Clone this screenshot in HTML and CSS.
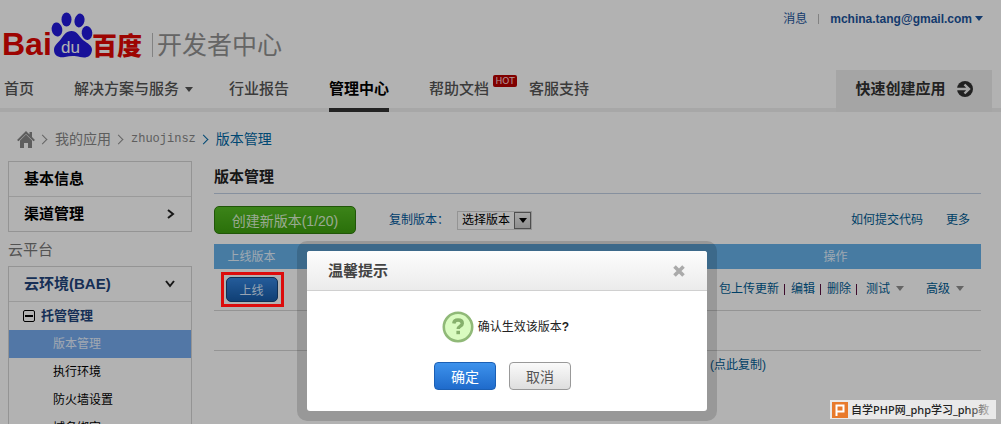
FILE: index.html
```
<!DOCTYPE html>
<html lang="zh-CN">
<head>
    <meta charset="UTF-8">
    <meta name="viewport" content="width=device-width, initial-scale=1.0">
    <title>版本管理</title>
    <link rel="stylesheet" href="styles.css">
</head>
<body>
    <header class="header">
        <div class="top">
            <div class="brand">
                <svg class="logo" width="140" height="50" viewBox="0 0 140 50" role="img" aria-label="Baidu 百度">
                    <g class="logo-red">
                        <text class="logo-bai" x="-2" y="46">Bai</text>
                        <text class="logo-cn" x="88" y="46">百度</text>
                    </g>
                    <g class="logo-blue">
                        <ellipse cx="53" cy="20.500" rx="5.300" ry="7" transform="rotate(-10 53 20.500)"/>
                        <ellipse cx="62.500" cy="10.500" rx="5" ry="7"/>
                        <ellipse cx="75.500" cy="11.500" rx="5" ry="7" transform="rotate(12 75.500 11.500)"/>
                        <ellipse cx="83" cy="24" rx="5.300" ry="7" transform="rotate(-6 83 24)"/>
                        <path d="M67.500 22C73 22 75 27 79 31C84 35 88 36 88 41C87 49 81 49 76 48C70 46.500 66 47 61 48C55 49 50 47 50 41C50 36 54 34 57 30C60 26 62 22 67.500 22Z"/>
                    </g>
                    <text class="logo-du" x="57" y="44">du</text>
                </svg>
                <span class="brand-name">开发者中心</span>
            </div>
            <div class="user">
                <a href="#">消息</a>
                <span class="user-sep"></span>
                <a href="#" class="user-mail">mchina.tang@gmail.com<i class="arrow arrow-blue"></i></a>
            </div>
        </div>
        <nav class="nav">
            <a href="#">首页</a>
            <a href="#">解决方案与服务<i class="arrow arrow-nav"></i></a>
            <a href="#">行业报告</a>
            <a href="#" class="active">管理中心</a>
            <a href="#" class="nav-doc">帮助文档<span class="hot">HOT</span></a>
            <a href="#">客服支持</a>
            <a href="#" class="quick">快速创建应用
                <svg width="16" height="16" viewBox="0 0 16 16">
                    <circle cx="8" cy="8" r="8" fill="#323232"/>
                    <path d="M0 8h11M7.500 3.500L12 8l-4.500 4.500" fill="none" stroke="#ededed" stroke-width="2.400"/>
                </svg>
            </a>
        </nav>
    </header>

    <nav class="crumbs">
        <a href="#" aria-label="home">
            <svg width="18" height="17" viewBox="0 0 18 17" fill="#878787">
                <path d="M9 0L0 9l1.500 1.200L9 3l7.500 7.200L18 9l-3-3V1h-2.500v2.500Z"/>
                <path d="M9 3.500L3 9.500V17h4v-5h4v5h4V9.500Z"/>
            </svg>
        </a>
        <i class="chev"></i>
        <a href="#">我的应用</a>
        <i class="chev"></i>
        <a href="#" class="app-name">zhuojinsz</a>
        <i class="chev chev-blue"></i>
        <a href="#" class="current">版本管理</a>
    </nav>

    <div class="layout">
        <aside class="sidebar">
            <div class="box">
                <a href="#" class="box-item">基本信息</a>
                <a href="#" class="box-item">渠道管理
                    <svg width="8" height="10" viewBox="0 0 8 10"><path d="M1 1l5 4-5 4" fill="none" stroke="#222" stroke-width="2"/></svg>
                </a>
            </div>
            <div class="side-title">云平台</div>
            <div class="box">
                <a href="#" class="box-item env"><span>云环境(BAE)</span>
                    <svg width="10" height="8" viewBox="0 0 10 8"><path d="M1 1l4 5 4-5" fill="none" stroke="#222" stroke-width="2"/></svg>
                </a>
                <a href="#" class="group"><i class="minus"></i>托管管理</a>
                <a href="#" class="sub selected">版本管理</a>
                <a href="#" class="sub">执行环境</a>
                <a href="#" class="sub">防火墙设置</a>
                <a href="#" class="sub">域名绑定</a>
            </div>
        </aside>

        <main class="content">
            <h1>版本管理</h1>
            <div class="toolbar">
                <button type="button" class="btn-green">创建新版本(1/20)</button>
                <label for="copy-version">复制版本：</label>
                <span class="select-box">
                    <select id="copy-version">
                        <option>选择版本</option>
                    </select>
                    <span class="select-arrow"><i class="arrow"></i></span>
                </span>
                <div class="links">
                    <a href="#">如何提交代码</a>
                    <a href="#">更多</a>
                </div>
            </div>
            <table class="versions">
                <thead>
                    <tr>
                        <th class="col-online">上线版本</th>
                        <th></th>
                        <th class="col-action">操作</th>
                    </tr>
                </thead>
                <tbody>
                    <tr>
                        <td class="col-online"><button type="button" class="btn-online">上线</button></td>
                        <td></td>
                        <td class="col-action">
                            <div class="actions">
                                <a href="#">包上传更新</a>
                                <i class="bar"></i>
                                <a href="#">编辑</a>
                                <i class="bar"></i>
                                <a href="#">删除</a>
                                <i class="bar"></i>
                                <a href="#" class="more">测试<i class="arrow arrow-gray"></i></a>
                                <a href="#" class="more">高级<i class="arrow arrow-gray"></i></a>
                            </div>
                        </td>
                    </tr>
                    <tr>
                        <td colspan="3"></td>
                    </tr>
                </tbody>
            </table>
            <div class="address"><a href="#">(点此复制)</a></div>
        </main>
    </div>

    <div class="mask"></div>
    <div class="mark"></div>

    <div class="dialog" role="dialog" aria-labelledby="dialog-title">
        <div class="dialog-inner">
            <div class="dialog-head">
                <h2 id="dialog-title">温馨提示</h2>
                <button type="button" class="close" aria-label="close">
                    <svg width="12" height="12" viewBox="0 0 12 12"><path d="M1.500 1.500l9 9M10.500 1.500l-9 9" stroke="#aaa" stroke-width="3.600"/></svg>
                </button>
            </div>
            <div class="message">
                <svg width="32" height="32" viewBox="0 0 32 32">
                    <circle cx="16" cy="16" r="14.200" fill="#d9fbc0" stroke="#90b978" stroke-width="2.600"/>
                    <path d="M11.800 12.500c.2-2.500 1.800-3.500 4.200-3.500s4.300 1.200 4.300 3.400c0 2.800-4.100 2.700-4.100 5.600" fill="none" stroke="#86b06c" stroke-width="3.400"/>
                    <rect x="14.400" y="19.800" width="3.600" height="3.400" fill="#86b06c"/>
                </svg>
                <span>确认生效该版本<b>?</b></span>
            </div>
            <div class="dialog-buttons">
                <button type="button" class="btn-ok">确定</button>
                <button type="button" class="btn-cancel">取消</button>
            </div>
        </div>
    </div>

    <div class="watermark">
        <svg width="16" height="16" viewBox="0 0 16 16">
            <rect width="16" height="16" fill="#e87a2c"/>
            <path d="M4.500 14V3.500h7v6h-7" fill="none" stroke="#fff" stroke-width="2"/>
        </svg>
        <span>自学PHP网_php学习_php教</span>
    </div>
</body>
</html>
```
FILE: styles.css
```
* {
    box-sizing: border-box;
}

body {
    margin: 0;
    height: 100vh;
    overflow: hidden;
    background: #fff;
    color: #222;
    font: 12px/20px "Liberation Sans", "Noto Sans CJK SC", sans-serif;
}

a {
    color: #005c94;
    text-decoration: none;
}

button, select {
    font-family: inherit;
    cursor: pointer;
}

.arrow {
    display: inline-block;
    border: 4px solid transparent;
    border-top: 5px solid #000;
    border-bottom: 0;
}

/* header */
.top {
    display: flex;
    justify-content: space-between;
    height: 70px;
    padding: 9px 18px 0 4px;
}

.brand {
    display: flex;
    align-items: flex-start;
}

.logo {
    overflow: visible;
}

.logo-red {
    fill: #e10602;
    font-weight: bold;
}

.logo-blue {
    fill: #2319dc;
}

.logo-bai {
    font-size: 32px;
}

.logo-cn {
    font-size: 25px;
    font-weight: 900;
}

.logo-du {
    fill: #fff;
    font-size: 17px;
}

.brand-name {
    margin: 24px 0 0 8px;
    padding-left: 4px;
    border-left: 1px solid #bbb;
    color: #919191;
    font-size: 25px;
    line-height: 24px;
}

.user {
    display: flex;
    align-items: center;
    height: 20px;
}

.user a {
    color: #1c549c;
}

.user-sep {
    height: 10px;
    margin: 0 11px;
    border-left: 1px solid #bbb;
}

.user .user-mail {
    font-weight: bold;
}

.arrow-blue {
    margin: 0 0 2px 3px;
    border-top-color: #1c549c;
}

.nav {
    display: flex;
    gap: 40px;
    height: 42px;
    padding: 0 9px 0 4px;
    background: linear-gradient(#f0f0f0, #f0f0f0) 0 38px / 100% 4px no-repeat;
    font-size: 15px;
    line-height: 38px;
}

.nav a {
    color: #555;
    font-weight: 500;
}

.arrow-nav {
    margin: 0 -4px 2px 6px;
    border-top-color: #555;
}

.nav .active {
    border-bottom: 4px solid #333;
    color: #000;
    font-weight: bold;
}

.nav-doc {
    position: relative;
}

.hot {
    position: absolute;
    top: 5px;
    left: 64px;
    width: 24px;
    border-radius: 2px;
    background: #b80000;
    color: #ffd5d5;
    font: 9px/12px "DejaVu Sans", sans-serif;
    text-align: center;
}

.nav .quick {
    display: flex;
    align-items: center;
    justify-content: center;
    gap: 11px;
    width: 156px;
    margin-left: auto;
    padding-bottom: 4px;
    background: #ededed;
    color: #323232;
    font-weight: bold;
}

/* breadcrumbs */
.crumbs {
    display: flex;
    align-items: center;
    gap: 9px;
    padding: 17px 17px 12px;
    font-size: 14px;
}

.crumbs a {
    display: flex;
    color: #878787;
}

.crumbs .app-name {
    font-family: "Liberation Mono", monospace;
    font-size: 12px;
}

.crumbs .current {
    color: #0067a5;
}

.chev {
    width: 7px;
    height: 7px;
    margin-left: -5px;
    border: solid #919191;
    border-width: 1px 1px 0 0;
    transform: rotate(45deg);
}

.chev-blue {
    border-color: #0067a5;
}

/* sidebar */
.layout {
    display: flex;
    gap: 22px;
    padding: 0 20px 0 8px;
}

.sidebar {
    flex: 0 0 184px;
}

.box {
    border: 1px solid #d5d5d5;
}

.box-item {
    display: flex;
    align-items: center;
    justify-content: space-between;
    height: 34px;
    padding: 0 16px 0 15px;
    color: #000;
    font-size: 15px;
    font-weight: bold;
}

.box-item + .box-item {
    height: 35px;
    border-top: 1px solid #ddd;
}

.side-title {
    height: 34px;
    color: #777;
    font-size: 15px;
    line-height: 35px;
}

.box .env {
    height: 35px;
    border-bottom: 1px solid #ddd;
    color: #22447b;
}

.group {
    display: flex;
    align-items: center;
    gap: 6px;
    height: 28px;
    padding-left: 14px;
    color: #22447b;
    font-size: 13px;
    font-weight: bold;
}

.minus {
    width: 12px;
    height: 12px;
    border: 1px solid #000;
    border-radius: 2px;
    background: linear-gradient(#000, #000) center / 8px 2px no-repeat;
}

.sub {
    display: block;
    padding-left: 44px;
    color: #000;
    line-height: 28px;
}

.selected {
    background: #76abee;
    color: #e6f1ff;
}

/* content */
.content {
    flex: 1;
    min-width: 0;
}

h1 {
    height: 33px;
    margin: 0 0 12px;
    border-bottom: 1px solid #c0cfe3;
    font-size: 15px;
    line-height: 32px;
}

.toolbar {
    display: flex;
    align-items: center;
    height: 28px;
    margin-bottom: 10px;
}

.btn-green {
    width: 142px;
    height: 28px;
    margin-right: 33px;
    padding: 0;
    border: 1px solid #2f7c0c;
    border-radius: 5px;
    background: linear-gradient(#56bd24, #3da00f);
    color: #dcf3d2;
    font-size: 14px;
}

.toolbar label {
    width: 68px;
    color: #00589c;
}

.select-box {
    display: flex;
    width: 75px;
    height: 19px;
    border: 1px solid #d5d5d5;
}

.select-box select {
    flex: 1;
    min-width: 0;
    padding: 0 0 0 4px;
    appearance: none;
    border: 0;
    background: none;
    color: #000;
    font-size: 12px;
}

.select-arrow {
    display: flex;
    align-items: center;
    justify-content: center;
    width: 17px;
    border: 1px solid #707070;
    background: linear-gradient(#f0f0f0, #cdcdcd);
    pointer-events: none;
}

.links {
    display: flex;
    gap: 23px;
    margin: 0 11px 0 auto;
}

.versions {
    width: 100%;
    table-layout: fixed;
    border-collapse: collapse;
}

.versions th {
    height: 25px;
    padding: 0;
    background: #66b0e8;
    color: #e2f2ff;
    font-weight: normal;
}

.versions td {
    height: 40px;
    padding: 0;
    border-bottom: 1px solid #d5d5d5;
}

.versions .col-online {
    width: 75px;
    text-align: center;
}

.versions td.col-online {
    height: 41px;
}

.versions .col-action {
    width: 291px;
}

.btn-online {
    width: 52px;
    height: 25px;
    padding: 0;
    border: 1px solid #164478;
    border-radius: 5px;
    background: linear-gradient(#3584dd, #175ba8);
    color: #d8eaff;
    font-size: 12px;
}

.actions {
    display: flex;
    align-items: center;
    padding-left: 29px;
}

.bar {
    height: 11px;
    margin: 0 6px 0 5px;
    border-left: 1px solid #5a1040;
}

.more {
    margin: 0 22px 0 3px;
}

.more + .more {
    margin: 0;
}

.arrow-gray {
    margin: 0 0 2px 6px;
    border-top-color: #919191;
}

.address {
    padding: 4px 0 0 496px;
}

/* overlay */
.mask {
    position: fixed;
    inset: 0;
    background: rgba(0, 0, 0, .3);
}

.mark {
    position: absolute;
    top: 272px;
    left: 221px;
    width: 63px;
    height: 35px;
    border: 3px solid #dc0c0c;
}

.dialog {
    position: fixed;
    top: 241px;
    left: 297px;
    width: 420px;
    padding: 10px;
    border-radius: 10px;
    background: rgba(0, 0, 0, .15);
}

.dialog-inner {
    overflow: hidden;
    padding-bottom: 21px;
    border-radius: 3px;
    background: #fff;
}

.dialog-head {
    display: flex;
    align-items: center;
    justify-content: space-between;
    height: 40px;
    padding: 0 22px 0 21px;
    border-bottom: 1px solid #d0d0d0;
    background: linear-gradient(#fdfdfd, #ebebeb);
}

h2 {
    margin: 0;
    color: #444;
    font-size: 15px;
}

.close {
    display: flex;
    padding: 0;
    border: 0;
    background: none;
}

.message {
    display: flex;
    align-items: center;
    justify-content: center;
    gap: 4px;
    margin: 20px 0 19px;
    padding-right: 3px;
}

.dialog-buttons {
    display: flex;
    justify-content: center;
    gap: 13px;
    padding-right: 9px;
}

.dialog-buttons button {
    width: 62px;
    height: 28px;
    padding: 0;
    border-radius: 4px;
    font-size: 14px;
}

.btn-ok {
    border: 1px solid #1b5fb4;
    background: linear-gradient(#3d92ec, #1f6bcb);
    color: #fff;
}

.btn-cancel {
    border: 1px solid #999;
    background: linear-gradient(#fafafa, #dedede);
    color: #555;
}

.watermark {
    position: fixed;
    right: 5px;
    bottom: 5px;
    display: flex;
    align-items: center;
    gap: 3px;
    width: 166px;
    height: 19px;
    padding-left: 2px;
    background: #e9e9e9;
    color: #222;
    font: 500 11px/19px "Noto Sans", "Noto Sans CJK SC", sans-serif;
    white-space: nowrap;
}

.watermark svg {
    flex: none;
}

.watermark::after {
    content: "";
    position: absolute;
    inset: 0 0 0 auto;
    width: 30px;
    background: linear-gradient(to right, transparent, #e9e9e9);
}
```
